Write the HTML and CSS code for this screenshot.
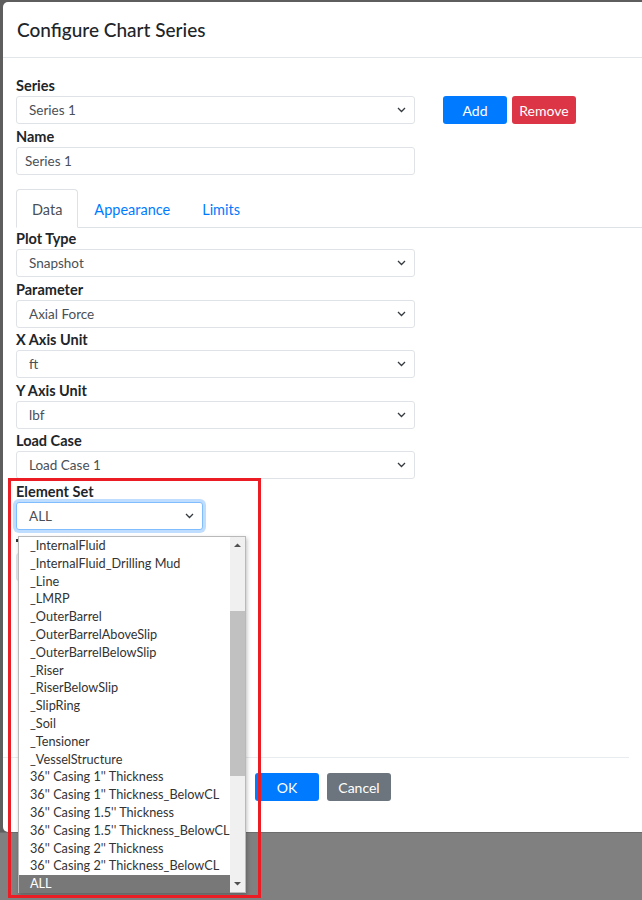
FILE: index.html
```html
<!DOCTYPE html>
<html lang="en">
<head>
    <meta charset="UTF-8" />
    <title>Configure Chart Series</title>
    <link rel="stylesheet" href="styles.css">
</head>
<body>
<div class="frame">
  <div class="modal">
    <div class="modal-header">
      <h5>Configure Chart Series</h5>
    </div>

    <div class="modal-body">
      <div class="series-row">
        <div class="series-col">
          <label>Series</label>
          <div class="select">
            <span>Series 1</span>
            <svg class="chev" width="9" height="6" viewBox="0 0 9 6"><path d="M1 1l3.5 3.5L8 1" fill="none" stroke="#343a40" stroke-width="1.3"/></svg>
          </div>
          <label>Name</label>
          <div class="input">Series 1</div>
        </div>
        <div class="series-buttons">
          <button class="btn btn-primary">Add</button>
          <button class="btn btn-danger">Remove</button>
        </div>
      </div>

      <ul class="tabs">
        <li class="tab active">Data</li>
        <li class="tab">Appearance</li>
        <li class="tab">Limits</li>
      </ul>

      <div class="field">
        <label>Plot Type</label>
        <div class="select wide"><span>Snapshot</span>
          <svg class="chev" width="9" height="6" viewBox="0 0 9 6"><path d="M1 1l3.5 3.5L8 1" fill="none" stroke="#343a40" stroke-width="1.3"/></svg></div>
      </div>
      <div class="field">
        <label>Parameter</label>
        <div class="select wide"><span>Axial Force</span>
          <svg class="chev" width="9" height="6" viewBox="0 0 9 6"><path d="M1 1l3.5 3.5L8 1" fill="none" stroke="#343a40" stroke-width="1.3"/></svg></div>
      </div>
      <div class="field">
        <label>X Axis Unit</label>
        <div class="select wide"><span>ft</span>
          <svg class="chev" width="9" height="6" viewBox="0 0 9 6"><path d="M1 1l3.5 3.5L8 1" fill="none" stroke="#343a40" stroke-width="1.3"/></svg></div>
      </div>
      <div class="field">
        <label>Y Axis Unit</label>
        <div class="select wide"><span>lbf</span>
          <svg class="chev" width="9" height="6" viewBox="0 0 9 6"><path d="M1 1l3.5 3.5L8 1" fill="none" stroke="#343a40" stroke-width="1.3"/></svg></div>
      </div>
      <div class="field">
        <label>Load Case</label>
        <div class="select wide"><span>Load Case 1</span>
          <svg class="chev" width="9" height="6" viewBox="0 0 9 6"><path d="M1 1l3.5 3.5L8 1" fill="none" stroke="#343a40" stroke-width="1.3"/></svg></div>
      </div>
      <div class="field">
        <label>Element Set</label>
        <div class="select short focus"><span>ALL</span>
          <svg class="chev" width="9" height="6" viewBox="0 0 9 6"><path d="M1 1l3.5 3.5L8 1" fill="none" stroke="#343a40" stroke-width="1.3"/></svg></div>
      </div>
      <!-- field hidden under the open list -->
      <div class="field">
        <div class="label-stub"></div>
        <div class="input disabled short"></div>
      </div>
    </div>

    <div class="modal-footer">
      <button class="btn btn-primary">OK</button>
      <button class="btn btn-secondary">Cancel</button>
    </div>
  </div>
</div>

<!-- open select list for Element Set -->
<div class="dropdown">
  <ul class="options">
    <li>_InternalFluid</li>
    <li>_InternalFluid_Drilling Mud</li>
    <li>_Line</li>
    <li>_LMRP</li>
    <li>_OuterBarrel</li>
    <li>_OuterBarrelAboveSlip</li>
    <li>_OuterBarrelBelowSlip</li>
    <li>_Riser</li>
    <li>_RiserBelowSlip</li>
    <li>_SlipRing</li>
    <li>_Soil</li>
    <li>_Tensioner</li>
    <li>_VesselStructure</li>
    <li>36'' Casing 1'' Thickness</li>
    <li>36'' Casing 1'' Thickness_BelowCL</li>
    <li>36'' Casing 1.5'' Thickness</li>
    <li>36'' Casing 1.5'' Thickness_BelowCL</li>
    <li>36'' Casing 2'' Thickness</li>
    <li>36'' Casing 2'' Thickness_BelowCL</li>
    <li class="selected">ALL</li>
  </ul>
  <div class="scrollbar">
    <svg class="arrow-up" width="15" height="17" viewBox="0 0 15 17"><path d="M4 10h7L7.5 6.5z" fill="#505050"/></svg>
    <div class="track">
      <div class="thumb"></div>
    </div>
    <svg class="arrow-down" width="15" height="17" viewBox="0 0 15 17"><path d="M4 7h7L7.5 10.5z" fill="#505050"/></svg>
  </div>
</div>

<div class="highlight"></div>
</body>
</html>
```

FILE: styles.css
```css
* {
  box-sizing: border-box;
}
body {
  margin: 0;
  background: #808080;
  font-family: Lato, "Noto Sans", sans-serif;
  color: #212529;
  overflow: hidden;
  height: 900px;
}
.frame {
  height: 833px;
  background: #5e5e5e;
  padding: 2px 0 0 3px;
  border-bottom: 1px solid #6c6c6c;
}
.modal {
  background: white;
  height: 830px;
  border-radius: 5px 0 0 5px;
  display: flex;
  flex-direction: column;
}
.modal-header {
  height: 56px;
  padding: 0 14px;
  border-bottom: 1px solid #e3e6e9;
  display: flex;
  align-items: center;
}
.modal-header h5 {
  margin: 0;
  font-size: 19px;
  font-weight: 500;
}
.modal-body {
  padding: 17px 13px 0;
  height: 699px;
  overflow: hidden;
}
label {
  display: block;
  font-size: 14.5px;
  font-weight: bold;
  line-height: 20px;
  padding-top: 1px;
}
.label-stub {
  height: 21px;
  padding-top: 7px;
}
.label-stub::before {
  content: "";
  display: block;
  width: 2px;
  height: 3px;
  background: #333;
}
.series-row {
  display: flex;
  gap: 28px;
}
.series-col {
  width: 399px;
}
.series-col .select {
  margin-bottom: 2px;
}
.series-buttons {
  display: flex;
  gap: 5px;
  padding-top: 21px;
}
.btn {
  width: 64px;
  height: 28px;
  border: none;
  border-radius: 3px;
  color: white;
  font-family: inherit;
  font-size: 14px;
  cursor: pointer;
}
.btn-primary {
  background: #007bff;
}
.btn-danger {
  background: #dc3545;
}
.btn-secondary {
  background: #6c757d;
}
.select, .input {
  height: 28px;
  border: 1px solid #dfe2e6;
  border-radius: 3px;
  font-size: 13.5px;
  color: #495057;
  display: flex;
  align-items: center;
  justify-content: space-between;
  padding: 0 8px 0 12px;
  background: white;
}
.input {
  padding-left: 8px;
}
.select.wide {
  width: 399px;
}
.select.short, .input.short {
  width: 187px;
}
.select.focus {
  border-color: #80bdff;
  box-shadow: 0 0 0 3px rgba(0, 123, 255, 0.25);
}
.input.disabled {
  background: #e9ecef;
}
.tabs {
  list-style: none;
  margin: 14px 0 0;
  padding: 0;
  display: flex;
  border-bottom: 1px solid #dee2e6;
  margin-right: -13px;
}
.tab {
  height: 39px;
  padding: 1px 15px 0;
  display: flex;
  align-items: center;
  font-size: 14.5px;
  color: #007bff;
  border: 1px solid transparent;
  border-radius: 4px 4px 0 0;
  margin-bottom: -1px;
}
.tab.active {
  color: #495057;
  border-color: #dee2e6 #dee2e6 white;
  background: white;
}
.field {
  margin-bottom: 1.6px;
}
.modal-footer {
  width: 626px;
  border-top: 1px solid #e9ecef;
  padding: 15px 0 0 252px;
  display: flex;
  gap: 8px;
}
.dropdown {
  position: absolute;
  left: 18px;
  top: 536px;
  width: 228px;
  height: 357px;
  background: white;
  border: 1px solid #b9b9b9;
  box-shadow: 1px 2px 4px rgba(0, 0, 0, 0.25);
  display: flex;
}
.options {
  list-style: none;
  margin: 0;
  padding: 0;
  flex: 1;
  min-width: 0;
}
.options li {
  height: 17.8px;
  line-height: 17.8px;
  padding-left: 11px;
  font-size: 12.7px;
  color: #333;
  white-space: nowrap;
}
.options li.selected {
  background: #787878;
  color: white;
}
.scrollbar {
  width: 15px;
  background: #f0f0f0;
  display: flex;
  flex-direction: column;
}
.scrollbar svg {
  display: block;
}
.track {
  flex: 1;
  padding-top: 57px;
}
.thumb {
  height: 165px;
  background: #c1c1c1;
}
.highlight {
  position: absolute;
  left: 8px;
  top: 478px;
  width: 253px;
  height: 420px;
  border: 3px solid #ec1c24;
}
```
